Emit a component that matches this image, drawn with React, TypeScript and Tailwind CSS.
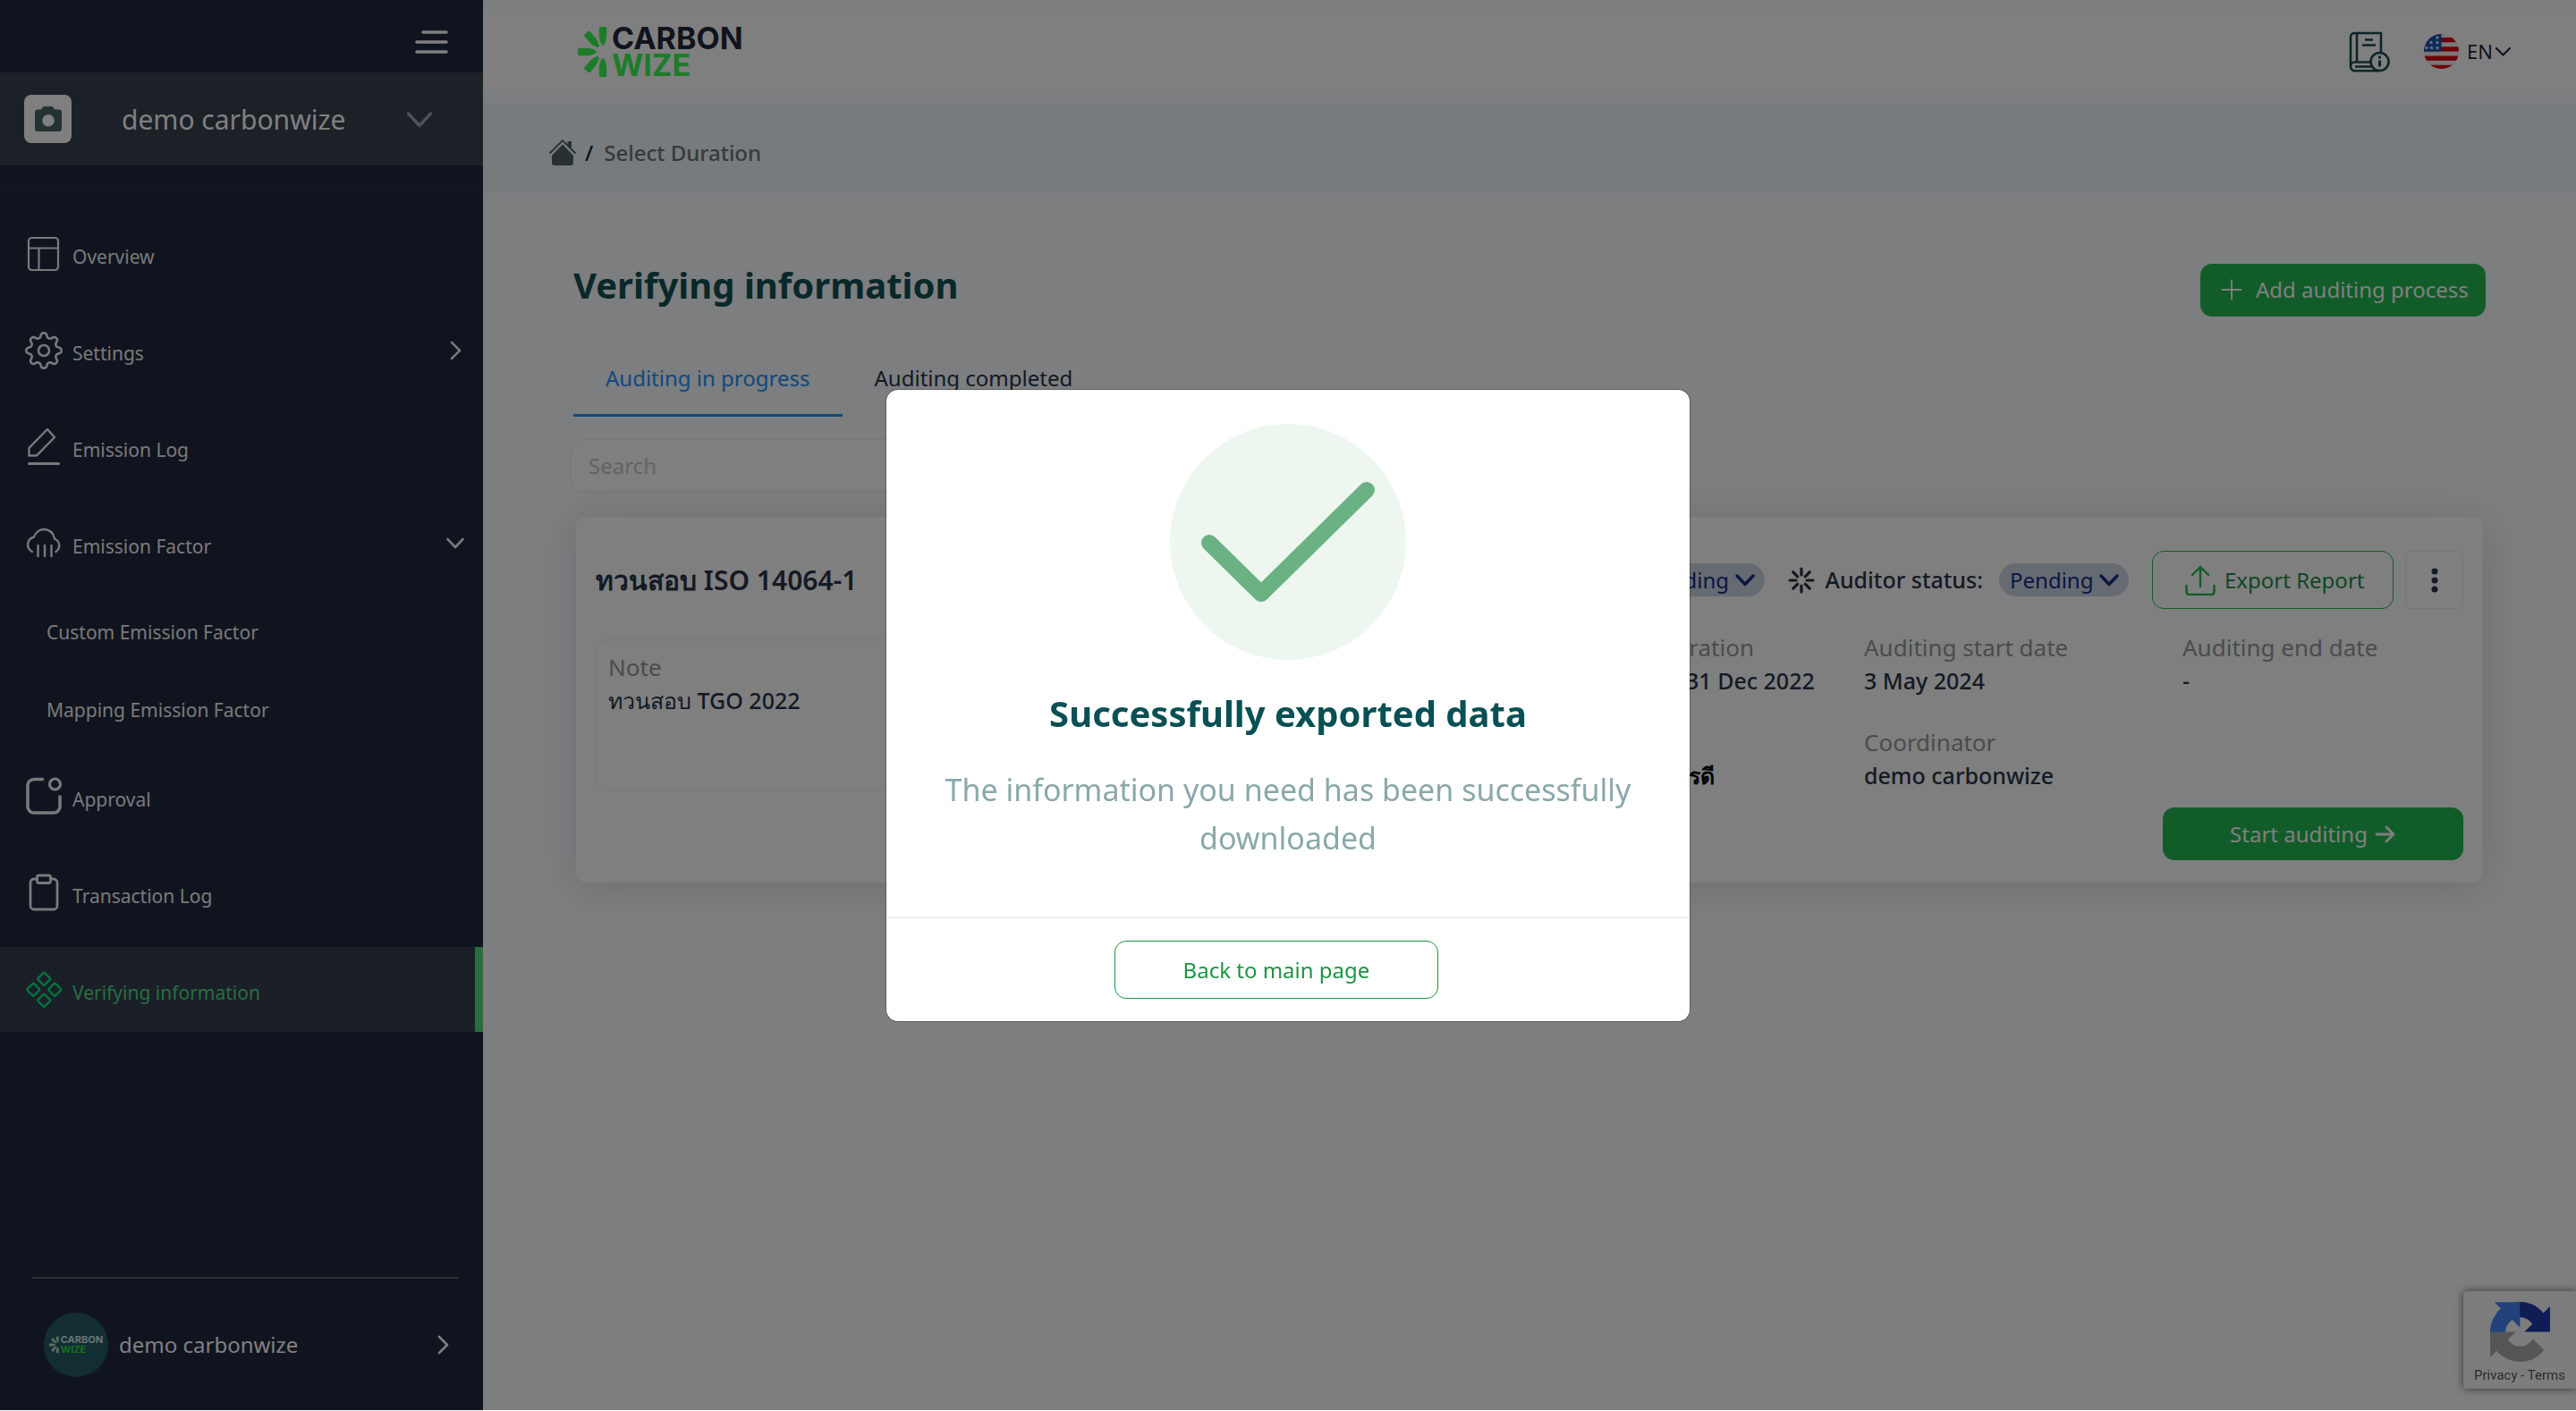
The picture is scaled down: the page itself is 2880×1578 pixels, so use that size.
import React from 'react';
import type { ReactNode } from 'react';

const GEAR_PATH =
  Array.from({ length: 192 }, (_, i) => {
    const a = (i / 192) * Math.PI * 2;
    const r = 17.2 + 2.7 * Math.tanh(1.5 * Math.cos(8 * a));
    return `${i ? 'L' : 'M'}${(22 + r * Math.sin(a)).toFixed(2)} ${(22 - r * Math.cos(a)).toFixed(2)}`;
  }).join('') + 'Z';

function Icon({ size = 44, children, className = '' }: { size?: number; children: ReactNode; className?: string }) {
  return (
    <svg
      width={size}
      height={size}
      viewBox={`0 0 ${size} ${size}`}
      fill="none"
      stroke="currentColor"
      strokeLinecap="round"
      strokeLinejoin="round"
      aria-hidden="true"
      className={`shrink-0 ${className}`}
    >
      {children}
    </svg>
  );
}

const OverviewIcon = () => (
  <Icon>
    <g strokeWidth="2.2">
      <rect x="5" y="4" width="33" height="36" rx="3.5" />
      <path d="M5 15.5h33M16.5 15.5V40" />
    </g>
  </Icon>
);

const SettingsIcon = () => (
  <Icon>
    <g strokeWidth="2.6">
      <path d={GEAR_PATH} />
      <circle cx="22" cy="22" r="6" />
    </g>
  </Icon>
);

const PencilIcon = () => (
  <Icon>
    <path strokeWidth="2.4" d="M26 2l8 9-20 20.500H5.500V23z" />
    <path strokeWidth="3" d="M5.500 40.500h33" />
  </Icon>
);

const CloudIcon = () => (
  <Icon>
    <g strokeWidth="2.4">
      <path d="M9 31C5.500 29 3.500 25.500 4.200 21.500 4.800 18 7.500 15.500 11 14.500 12.500 9.500 17 6 22 6c6 0 10.500 4 12 10.500 3.500 1.500 5.500 4.500 5.200 8.500-.2 2.500-1.700 4.500-3.700 6" />
      <path d="M15.500 24v12M23 24v12M30.500 24v12" />
    </g>
  </Icon>
);

const ApprovalIcon = () => (
  <Icon>
    <path strokeWidth="3.600" d="M20.500 2.500H11A7 7 0 0 0 4 9.500V33a7 7 0 0 0 7 7h22a7 7 0 0 0 7-7V22" />
    <circle cx="34.500" cy="8" r="6" strokeWidth="3.200" />
  </Icon>
);

const ClipboardIcon = () => (
  <Icon>
    <g strokeWidth="2.800">
      <path d="M14.500 6H11a4 4 0 0 0-4 4V36a4 4 0 0 0 4 4h22a4 4 0 0 0 4-4V10a4 4 0 0 0-4-4h-3.500" />
      <rect x="14.500" y="2" width="15" height="8.500" rx="2" />
    </g>
  </Icon>
);

const DiamondsIcon = () => (
  <Icon className="text-[#00e878]">
    <g strokeWidth="2.400">
      <rect x="17" y="4.500" width="10.500" height="10.500" rx="1.500" transform="rotate(45 22.250 9.750)" />
      <rect x="5" y="16.500" width="10.500" height="10.500" rx="1.500" transform="rotate(45 10.250 21.750)" />
      <rect x="29" y="16.500" width="10.500" height="10.500" rx="1.500" transform="rotate(45 34.250 21.750)" />
      <rect x="17" y="28.500" width="10.500" height="10.500" rx="1.500" transform="rotate(45 22.250 33.750)" />
    </g>
  </Icon>
);

function ChevronRight() {
  return (
    <Icon size={24}>
      <path strokeWidth="2.600" d="M8 3l9 9-9 9" />
    </Icon>
  );
}

function ChevronDown() {
  return (
    <Icon size={24}>
      <path strokeWidth="2.600" d="M3.500 7l8.500 9 8.500-9" />
    </Icon>
  );
}

function Burst({ className, width, height }: { className: string; width: number; height: number }) {
  const petal = 'M-4.200 -26.500 Q-4.200 -28 -2.700 -28 H2.700 Q4.200 -28 4.200 -26.500 V-17 Q3.600 -11 1.200 -7.500 H-1.200 Q-3.600 -11 -4.200 -17Z';
  return (
    <svg width={width} height={height} viewBox="0 0 33 56" aria-hidden="true" className={`shrink-0 ${className}`} fill="currentColor">
      <g transform="translate(28 28)">
        {[0, -41, -90, -139, 180].map((a) => (
          <path key={a} d={petal} transform={`rotate(${a})`} />
        ))}
      </g>
    </svg>
  );
}

function BookIcon() {
  return (
    <Icon size={46} className="text-[#1a4a50]">
      <g strokeWidth="2.600" strokeLinecap="butt">
        <path d="M36 23V2H6.500C3.500 2 2 4 2 6.500V39c0 3 2 5.300 5 5.300h27" />
        <path d="M9 2v32.500M26 34.500H6.500C4 34.500 2 36.500 2 39" />
        <path d="M7 39.500h18M18 9.500h9M15 15.500h15" />
        <circle cx="34.500" cy="34" r="10" />
        <path d="M34.500 32.500v7" strokeWidth="3" />
        <path d="M34.500 27.500v3" strokeWidth="3" />
      </g>
    </Icon>
  );
}

function UsFlag() {
  return (
    <svg width="39" height="39" viewBox="0 0 39 39" aria-hidden="true" className="shrink-0">
      <clipPath id="flag-round">
        <circle cx="19.500" cy="19.500" r="19.500" />
      </clipPath>
      <g clipPath="url(#flag-round)">
        <rect width="39" height="39" fill="#f0f0f0" />
        <path fill="#d80010" d="M0 4h39v5.300H0zM0 14.300h39v5.200H0zM0 24.600h39v5.200H0zM0 34.800h39V39H0z" />
        <rect width="19.500" height="19.500" fill="#1052b4" />
        {[
          [15, 4],
          [8, 9.5],
          [15, 9.5],
          [2.8, 15.5],
          [8.5, 15.5],
          [15, 15.5],
        ].map(([x, y]) => (
          <path
            key={`${x}-${y}`}
            fill="#f0f0f0"
            transform={`translate(${x} ${y})`}
            d="M0-2.600.7-.8 2.500-.8 1.100.4 1.600 2.200 0 1.100-1.600 2.200-1.100.4-2.500-.8-.7-.8z"
          />
        ))}
      </g>
    </svg>
  );
}

function RecaptchaLogo() {
  return (
    <svg width="67" height="67" viewBox="0 0 64 64" aria-hidden="true">
      <path fill="#1c3aa9" d="M64 31.955l-.033-1.370V4.687l-7.160 7.160C50.905 4.674 41.993.093 32.007.093c-10.380 0-19.610 4.962-25.450 12.650l11.736 11.860a15.550 15.550 0 0 1 4.754-5.334c2.050-1.600 4.952-2.906 8.968-2.906.485 0 .86.057 1.135.163 4.976.393 9.288 3.140 11.828 7.124l-8.307 8.307L64 31.953" />
      <path fill="#4285f4" d="M31.862.094l-1.370.033H4.594l7.160 7.160C4.580 13.147 0 22.060 0 32.046c0 10.380 4.962 19.610 12.650 25.450l11.860-11.736a15.550 15.550 0 0 1-5.334-4.754c-1.600-2.050-2.906-4.952-2.906-8.968 0-.485.057-.86.163-1.135.393-4.976 3.140-9.288 7.124-11.828l8.307 8.307L31.860.095" />
      <path fill="#ababab" d="M.001 32.045l.033 1.370v25.898l7.160-7.160c5.860 7.173 14.774 11.754 24.760 11.754 10.380 0 19.610-4.962 25.450-12.650l-11.736-11.860a15.550 15.550 0 0 1-4.754 5.334c-2.050 1.600-4.952 2.906-8.968 2.906-.485 0-.86-.057-1.135-.163-4.976-.393-9.288-3.140-11.828-7.124l8.307-8.307c-10.522.04-22.400.066-27.295-.005" />
    </svg>
  );
}

function NavItem({ icon, label, trailing, active }: { icon: ReactNode; label: string; trailing?: ReactNode; active?: boolean }) {
  return (
    <a
      href="#"
      aria-current={active ? 'page' : undefined}
      className={`flex h-[95px] items-center border-r-[9px] pr-2.5 pl-[27px] ${
        active ? 'border-[#50dc80] bg-[#343f50] text-[#50dc80]' : 'border-transparent text-[#f0f2f4]'
      }`}
    >
      {icon}
      <span className="mt-2 ml-2.5 flex-1 text-[21px]">{label}</span>
      {trailing}
    </a>
  );
}

function Sidebar() {
  return (
    <aside className="flex w-[540px] shrink-0 flex-col bg-[#20283c] text-white">
      <div className="flex h-[81px] items-center justify-end pt-3 pr-[38px]">
        <button type="button" aria-label="Toggle menu">
          <Icon size={40}>
            <path strokeWidth="3.600" d="M11 9h26M4 20h33M4 31h33" />
          </Icon>
        </button>
      </div>
      <button type="button" className="flex h-[104px] items-center bg-[#38404f] pr-14 pl-[27px] text-left">
        <span className="flex h-[54px] w-[53px] items-center justify-center rounded-lg bg-white">
          <svg width="30" height="28" viewBox="0 0 30 28" aria-hidden="true">
            <path fill="#4a6468" fillRule="evenodd" d="M9.500 0h10l3 3.500H27a3 3 0 0 1 3 3V25a3 3 0 0 1-3 3H3a3 3 0 0 1-3-3V6.500a3 3 0 0 1 3-3h4zM15 9a6.800 6.800 0 1 0 0 13.600A6.800 6.800 0 0 0 15 9z" />
          </svg>
        </span>
        <span className="ml-14 flex-1 text-[30px]">demo carbonwize</span>
        <Icon size={30} className="text-[#a0a3a8]">
          <path strokeWidth="3.400" d="M2.500 9L15 22.500 27.500 9" />
        </Icon>
      </button>
      <div className="h-[27px] border-b border-[#283040]" />
      <nav aria-label="Main" className="mt-6 flex flex-col gap-[13px]">
        <NavItem icon={<OverviewIcon />} label="Overview" />
        <NavItem icon={<SettingsIcon />} label="Settings" trailing={<ChevronRight />} />
        <NavItem icon={<PencilIcon />} label="Emission Log" />
        <NavItem icon={<CloudIcon />} label="Emission Factor" trailing={<ChevronDown />} />
        <div className="flex flex-col gap-3 pl-[52px] text-[21px] text-[#f0f2f4]">
          <a href="#" className="flex h-[75px] items-center pt-1">
            Custom Emission Factor
          </a>
          <a href="#" className="flex h-[75px] items-center pt-1">
            Mapping Emission Factor
          </a>
        </div>
        <NavItem icon={<ApprovalIcon />} label="Approval" />
        <NavItem icon={<ClipboardIcon />} label="Transaction Log" />
        <NavItem icon={<DiamondsIcon />} label="Verifying information" active />
      </nav>
      <div className="mx-[27px] mt-auto ml-9 border-t-2 border-[#585e6c] pt-[38px] pb-[37px]">
        <button type="button" className="flex w-full items-center pr-1.5 pl-[13px] text-left">
          <span className="flex size-[72px] items-center justify-center rounded-full bg-[#245c64]">
            <Burst className="mr-0.5 text-[#b8e0c0]" width={11} height={20} />
            <span className="flex flex-col font-[Inter] text-[11px] leading-[11px] font-bold">
              <span className="text-[#dde6e6]">CARBON</span>
              <span className="text-[#2cdc40]">WIZE</span>
            </span>
          </span>
          <span className="ml-3 flex-1 text-[24px]">demo carbonwize</span>
          <ChevronRight />
        </button>
      </div>
    </aside>
  );
}

function TopBar() {
  return (
    <header className="my-3 flex h-[91px] items-center justify-between bg-white pr-[69px] pl-[106px]">
      <a href="#" aria-label="Carbon Wize" className="flex items-center gap-[5px]">
        <Burst className="text-[#38f850]" width={33} height={56} />
        <span className="flex flex-col font-[Inter] text-[34px] leading-[30px] font-bold">
          <span className="text-[#20283c]">CARBON</span>
          <span className="text-[#38f850]">WIZE</span>
        </span>
      </a>
      <div className="flex items-center">
        <button type="button" aria-label="User manual" className="mr-[38px]">
          <BookIcon />
        </button>
        <button type="button" className="flex items-center text-[22px] text-[#20283c]">
          <UsFlag />
          <span className="ml-[9px]">EN</span>
          <Icon size={24}>
            <path strokeWidth="2.200" d="M4 8l7.500 7.500L19 8" />
          </Icon>
        </button>
      </div>
    </header>
  );
}

function Breadcrumb() {
  return (
    <nav aria-label="Breadcrumb" className="flex h-[101px] items-center gap-2.5 bg-[#eff6fa] pt-2.5 pl-[74px] text-[24px] font-medium">
      <a href="#" aria-label="Home">
        <svg width="30" height="29" viewBox="0 0 30 29" aria-hidden="true">
          <path fill="#506068" d="M15 5.500L27 18v8a3 3 0 0 1-3 3H6a3 3 0 0 1-3-3v-8z" />
          <path fill="none" stroke="#506068" strokeWidth="1.800" strokeLinecap="round" d="M1 15L15 1.200 29 15" />
          <path fill="#506068" d="M20.500 2H25v9l-4.500-4z" />
        </svg>
      </a>
      <span className="text-[#182030]">/</span>
      <span className="ml-0.5 text-[#6c7478]">Select Duration</span>
    </nav>
  );
}

function StatusPill({ id, label }: { id: string; label: string }) {
  return (
    <span className="relative flex items-center">
      <select
        id={id}
        aria-label={label}
        className="h-[37px] w-[145px] appearance-none rounded-full bg-[#ccd6e4] pl-3 text-[24px] leading-[36px] text-[#142c84]"
      >
        <option>Pending</option>
      </select>
      <Icon size={24} className="pointer-events-none absolute right-2.5 text-[#142c84]">
        <path strokeWidth="3.400" d="M3 7l9 9.500L21 7" />
      </Icon>
    </span>
  );
}

function Spinner() {
  return (
    <svg width="30" height="30" viewBox="0 0 30 30" aria-hidden="true" className="shrink-0" stroke="#283038" strokeWidth="3.200" strokeLinecap="round">
      {[0, 45, 90, 135, 180, 225, 270, 315].map((a) => (
        <path key={a} d="M15 2v7" transform={`rotate(${a} 15 15)`} />
      ))}
    </svg>
  );
}

function Field({ label, value, plain }: { label: string; value: string; plain?: boolean }) {
  return (
    <div className="leading-[37px] whitespace-nowrap">
      <dt className="text-[26px] text-[#94989a]">{label}</dt>
      <dd className={`text-[25px] ${plain ? 'font-semibold text-black' : 'font-medium text-[#28344a]'}`}>{value}</dd>
    </div>
  );
}

function AuditCard() {
  return (
    <article className="mx-[3px] mt-7 rounded-[10px] bg-white px-[22px] pt-[38px] pb-[25px] shadow-[0_4px_44px_rgba(60,50,80,0.16)]">
      <div className="flex items-center justify-between">
        <h2 className="text-[30px] font-semibold text-[#28344a]">ทวนสอบ ISO 14064-1</h2>
        <div className="flex items-center">
          <span className="mr-3.5 text-[25px] font-medium text-[#28344a]">Status:</span>
          <StatusPill id="status" label="Status" />
          <span className="w-[26px]" />
          <Spinner />
          <label htmlFor="auditor-status" className="mr-[18px] ml-3 text-[25px] font-medium text-[#28344a]">
            Auditor status:
          </label>
          <StatusPill id="auditor-status" label="Auditor status" />
          <button
            type="button"
            className="ml-[26px] flex h-[65px] w-[270px] items-center gap-2.5 rounded-[13px] border border-[#24b852] pl-9 text-[24px] text-[#1e8c44]"
          >
            <Icon size={34} className="text-[#24b852]">
              <path strokeWidth="2.400" d="M17 24V2M8 11l9-9 9 9M1.500 23v7a3 3 0 0 0 3 3h25a3 3 0 0 0 3-3v-7" />
            </Icon>
            Export Report
          </button>
          <button
            type="button"
            aria-label="More actions"
            className="ml-[13px] flex h-[65px] w-[65px] items-center justify-center rounded-md border border-[#eceef0]"
          >
            <svg width="8" height="28" viewBox="0 0 8 28" fill="#283448" aria-hidden="true">
              <circle cx="4" cy="4" r="3.500" />
              <circle cx="4" cy="14" r="3.500" />
              <circle cx="4" cy="24" r="3.500" />
            </svg>
          </button>
        </div>
      </div>
      <div className="mt-[25px] flex">
        <dl className="mt-[9px] mr-14 h-[169px] flex-1 rounded-[13px] border border-[#eceef0] px-[13px] pt-3">
          <Field label="Note" value="ทวนสอบ TGO 2022" />
        </dl>
        <dl className="grid grid-cols-[356px_356px_314px] content-start gap-y-8">
          <Field label="Reporting duration" value="01 Jan 2022 - 31 Dec 2022" />
          <Field label="Auditing start date" value="3 May 2024" />
          <Field label="Auditing end date" value="-" />
          <Field label="Auditor" value="นายทดสอบ การดี" plain />
          <Field label="Coordinator" value="demo carbonwize" />
        </dl>
      </div>
      <div className="mt-[17px] flex justify-end">
        <button type="button" className="flex h-[59px] w-[336px] items-center justify-center gap-2 rounded-[13px] bg-[#24b852] text-[24px] text-white">
          Start auditing
          <Icon size={24}>
            <path strokeWidth="2.800" d="M2 12h19M13 4l8 8-8 8" />
          </Icon>
        </button>
      </div>
    </article>
  );
}

function SuccessDialog() {
  return (
    <div className="fixed inset-0 flex items-center justify-center">
      <section
        role="dialog"
        aria-modal="true"
        aria-labelledby="dialog-title"
        className="w-[898px] rounded-[13px] bg-white text-center shadow-[0_0_0_1px_rgba(0,0,0,0.25)]"
      >
        <div className="flex flex-col items-center px-12 pt-[38px] pb-[62px]">
          <svg width="264" height="264" viewBox="0 0 264 264" aria-hidden="true">
            <circle cx="132" cy="132" r="132" fill="#edf7f0" />
            <path d="M44 133l58 57L220 74" fill="none" stroke="#6ab283" strokeWidth="18" strokeLinecap="round" strokeLinejoin="round" />
          </svg>
          <h2 id="dialog-title" className="mt-[30px] text-[40px] leading-[60px] font-bold text-[#085054]">
            Successfully exported data
          </h2>
          <p className="mt-7 text-[34px] leading-[54px] text-[#8aa8aa]">The information you need has been successfully downloaded</p>
        </div>
        <div className="flex justify-center border-t border-[#dee0e6] py-[25px] pr-[26px]">
          <button type="button" className="h-[65px] w-[362px] rounded-[13px] border border-[#1c9444] text-[24px] text-[#1c9444]">
            Back to main page
          </button>
        </div>
      </section>
    </div>
  );
}

export default function App() {
  return (
    <div className="bg-white font-['Noto_Sans',sans-serif]">
      <div className="flex min-h-[calc(100vh-1px)] bg-[#fafcff]">
        <Sidebar />
        <div className="min-w-0 flex-1">
          <TopBar />
          <Breadcrumb />
          <main className="px-[101px] pt-[79px]">
            <div className="flex items-start justify-between">
              <h1 className="text-[40px] leading-[48px] font-bold text-[#125054]">Verifying information</h1>
              <button type="button" className="flex h-[59px] w-[319px] items-center gap-3.5 rounded-[13px] bg-[#24b852] pb-0.5 pl-[22px] text-[24px] text-white">
                <Icon size={26}>
                  <path strokeWidth="1.800" d="M13 2.500v21M2.500 13h21" />
                </Icon>
                Add auditing process
              </button>
            </div>
            <div role="tablist" className="mt-[30px] flex text-[24px] text-[#28344a]">
              <button type="button" role="tab" aria-selected="true" className="h-[82px] border-b-[3px] border-[#2490ff] px-9 pb-0.5 text-[#2490ff]">
                Auditing in progress
              </button>
              <button type="button" role="tab" aria-selected="false" className="h-[82px] border-b-[3px] border-transparent px-9 pb-0.5">
                Auditing completed
              </button>
            </div>
            <input
              type="search"
              aria-label="Search"
              placeholder="Search"
              className="mt-[25px] -ml-[3px] block h-[59px] w-[640px] rounded-[13px] border border-[#eceef0] bg-white px-[19px] text-[24px] placeholder:text-[#c4c6c8]"
            />
            <AuditCard />
          </main>
        </div>
        <div className="fixed right-0 bottom-[25px] flex w-[126px] flex-col items-center gap-[7px] rounded-l-[4px] bg-[#f9f9f9] pt-3 pb-1.5 shadow-[0_0_10px_rgba(90,90,90,0.9)]">
          <RecaptchaLogo />
          <div className="font-[Roboto] text-[15px] leading-[17px] text-[#555]">
            <a href="#">Privacy</a> - <a href="#">Terms</a>
          </div>
        </div>
      </div>
      <div className="fixed inset-x-0 top-0 bottom-px bg-black/50" />
      <SuccessDialog />
    </div>
  );
}
